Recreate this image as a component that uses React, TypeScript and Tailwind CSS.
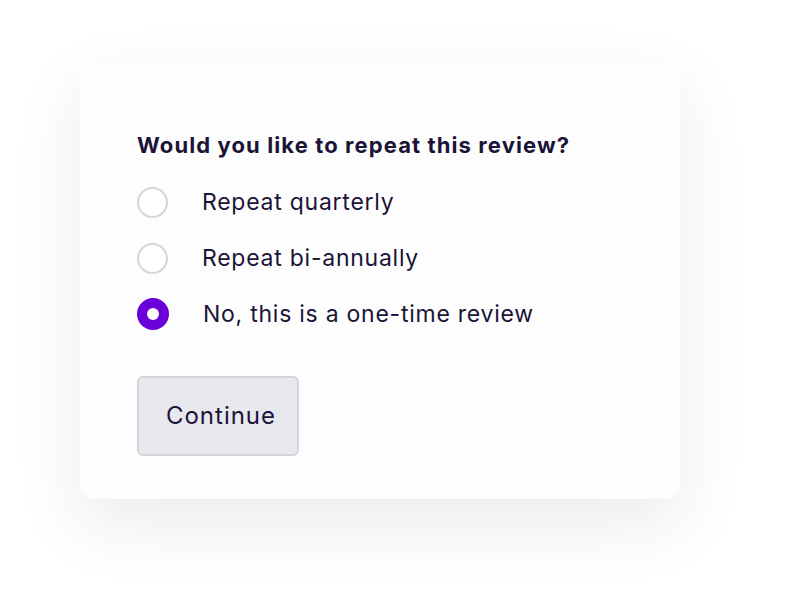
import React, { useState } from "react";

const options = [
  "Repeat quarterly",
  "Repeat bi-annually",
  "No, this is a one-time review",
];

export default function App() {
  const [selected, setSelected] = useState(2);

  return (
    <div className="flex h-[596px] w-[792px] items-start bg-white pl-[80px] pt-[64px] font-['Inter',sans-serif] text-[#1b1437]">
      {/* Card */}
      <div className="h-[435px] w-[600px] rounded-[14px] bg-[#fdfdfe] px-[57px] pt-[67px] shadow-[0_24px_70px_rgba(30,30,70,0.09)]">
        <h2 className="text-[22px] font-bold leading-[28px] tracking-[1.1px]">
          Would you like to repeat this review?
        </h2>

        <div className="mt-[27px] flex flex-col gap-[24px]">
          {options.map((label, idx) => (
            <label
              key={idx}
              onClick={() => setSelected(idx)}
              className="flex h-[32px] cursor-pointer items-center gap-[34px]"
            >
              {selected === idx ? (
                <span className="flex h-[32px] w-[32px] items-center justify-center rounded-full bg-[#6a00d9]">
                  <span className="h-[12px] w-[12px] rounded-full bg-white" />
                </span>
              ) : (
                <span className="h-[31px] w-[31px] rounded-full border-2 border-[#d6d6d6] bg-white" />
              )}
              <span className="text-[23px] leading-[28px] tracking-[0.75px]">
                {label}
              </span>
            </label>
          ))}
        </div>

        <button className="mt-[46px] h-[80px] w-[162px] rounded-[6px] border-2 border-[#d3d3d9] bg-[#e8e8ef] pl-[6px] text-[24px] tracking-[1px] text-[#1b1437]">
          Continue
        </button>
      </div>
    </div>
  );
}
